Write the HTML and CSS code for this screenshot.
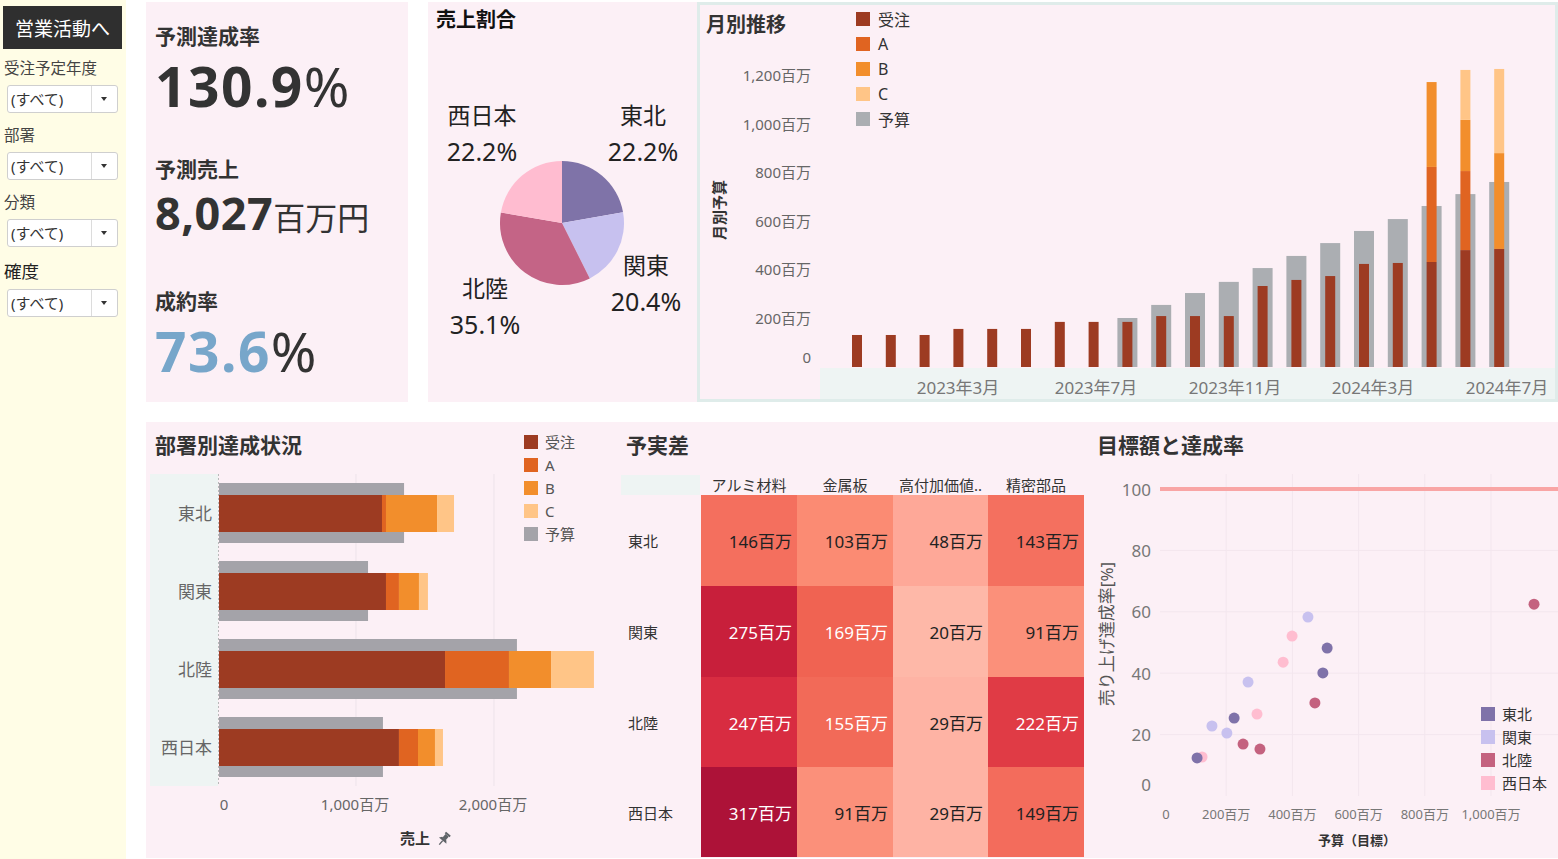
FILE: index.html
```html
<!DOCTYPE html>
<html lang="ja">
<head>
    <meta charset="UTF-8">
    <meta name="viewport" content="width=device-width, initial-scale=1.0">
    <title>営業ダッシュボード</title>
    <link rel="stylesheet" href="styles.css">
</head>
<body>
    <div class="sidebar">
        <button class="nav-button">営業活動へ</button>
        <div class="filter">
            <div class="filter-label">受注予定年度</div>
            <div class="select"><span class="select-value">(すべて)</span><span class="select-arrow"></span></div>
        </div>
        <div class="filter">
            <div class="filter-label">部署</div>
            <div class="select"><span class="select-value">(すべて)</span><span class="select-arrow"></span></div>
        </div>
        <div class="filter">
            <div class="filter-label">分類</div>
            <div class="select"><span class="select-value">(すべて)</span><span class="select-arrow"></span></div>
        </div>
        <div class="filter filter-last">
            <div class="filter-label">確度</div>
            <div class="select"><span class="select-value">(すべて)</span><span class="select-arrow"></span></div>
        </div>
    </div>

    <div class="dashboard">
        <div class="top-row">
            <div class="panel kpi">
                <div class="kpi-label">予測達成率</div>
                <div class="kpi-value"><span class="kpi-number">130.9</span><span class="kpi-unit">%</span></div>
                <div class="kpi-label kpi-gap">予測売上</div>
                <div class="kpi-value kpi-sales"><span class="kpi-number">8,027</span><span class="kpi-unit">百万円</span></div>
                <div class="kpi-label kpi-gap-lg">成約率</div>
                <div class="kpi-value"><span class="kpi-number kpi-blue">73.6</span><span class="kpi-unit">%</span></div>
            </div>

            <div class="panel pie-panel">
                <div class="panel-title pie-title">売上割合</div>
                <svg class="chart" width="269" height="370" viewBox="428 32 269 370">
                    <path d="M562 221 L562 159 A62 62 0 0 1 623.05 210.13 Z" fill="#7f73a8"/>
                    <path d="M562 221 L623.05 210.13 A62 62 0 0 1 589.8 276.42 Z" fill="#c7c1ef"/>
                    <path d="M562 221 L589.8 276.42 A62 62 0 0 1 500.89 210.53 Z" fill="#c46486"/>
                    <path d="M562 221 L500.89 210.53 A62 62 0 0 1 562 159 Z" fill="#ffbcd0"/>
                    <text class="pie-label" x="482" y="113">西日本</text>
                    <text class="pie-pct" x="482" y="149">22.2%</text>
                    <text class="pie-label" x="643" y="113">東北</text>
                    <text class="pie-pct" x="643" y="149">22.2%</text>
                    <text class="pie-label" x="646" y="263">関東</text>
                    <text class="pie-pct" x="646" y="299">20.4%</text>
                    <text class="pie-label" x="485" y="286">北陸</text>
                    <text class="pie-pct" x="485" y="322">35.1%</text>
                </svg>
            </div>

            <div class="panel monthly">
                <div class="panel-title monthly-title">月別推移</div>
                <ul class="legend monthly-legend">
                    <li><i class="swatch order"></i>受注</li>
                    <li><i class="swatch rank-a"></i>A</li>
                    <li><i class="swatch rank-b"></i>B</li>
                    <li><i class="swatch rank-c"></i>C</li>
                    <li><i class="swatch budget"></i>予算</li>
                </ul>
                <svg class="chart" id="monthlyChart" width="855" height="360" viewBox="700 39 855 360"></svg>
            </div>
        </div>

        <div class="bottom-row">
            <div class="panel dept">
                <div class="panel-title">部署別達成状況</div>
                <ul class="legend dept-legend">
                    <li><i class="swatch order"></i>受注</li>
                    <li><i class="swatch rank-a"></i>A</li>
                    <li><i class="swatch rank-b"></i>B</li>
                    <li><i class="swatch rank-c"></i>C</li>
                    <li><i class="swatch budget-dept"></i>予算</li>
                </ul>
                <svg class="chart" id="deptChart" width="468" height="397" viewBox="146 461 468 397"></svg>
            </div>

            <div class="panel diff">
                <div class="panel-title diff-title">予実差</div>
                <div class="heatmap">
                    <div class="heat-corner"></div>
                    <div class="heat-col">アルミ材料</div>
                    <div class="heat-col">金属板</div>
                    <div class="heat-col">高付加価値..</div>
                    <div class="heat-col">精密部品</div>

                    <div class="heat-row">東北</div>
                    <div class="heat-cell" style="background:#f46f5e">146百万</div>
                    <div class="heat-cell" style="background:#fb8b73">103百万</div>
                    <div class="heat-cell" style="background:#fea898">48百万</div>
                    <div class="heat-cell" style="background:#f4705f">143百万</div>

                    <div class="heat-row">関東</div>
                    <div class="heat-cell dark" style="background:#c81f3b">275百万</div>
                    <div class="heat-cell dark" style="background:#f06352">169百万</div>
                    <div class="heat-cell" style="background:#feb8a8">20百万</div>
                    <div class="heat-cell" style="background:#fb907a">91百万</div>

                    <div class="heat-row">北陸</div>
                    <div class="heat-cell dark" style="background:#d82c41">247百万</div>
                    <div class="heat-cell dark" style="background:#f26a58">155百万</div>
                    <div class="heat-cell" style="background:#feb3a4">29百万</div>
                    <div class="heat-cell dark" style="background:#e03b45">222百万</div>

                    <div class="heat-row">西日本</div>
                    <div class="heat-cell dark" style="background:#ad1238">317百万</div>
                    <div class="heat-cell" style="background:#fb907a">91百万</div>
                    <div class="heat-cell" style="background:#feb3a4">29百万</div>
                    <div class="heat-cell" style="background:#f36c5c">149百万</div>
                </div>
            </div>

            <div class="panel scatter">
                <div class="panel-title scatter-title">目標額と達成率</div>
                <ul class="legend scatter-legend">
                    <li><i class="swatch tohoku"></i>東北</li>
                    <li><i class="swatch kanto"></i>関東</li>
                    <li><i class="swatch hokuriku"></i>北陸</li>
                    <li><i class="swatch nishi"></i>西日本</li>
                </ul>
                <svg class="chart" id="scatterChart" width="468" height="397" viewBox="1090 461 468 397"></svg>
            </div>
        </div>
    </div>

    <script>
        const SVG_NS = 'http://www.w3.org/2000/svg';
        const STACK_COLORS = ['#9d3b22', '#e06421', '#f28e2c', '#ffc587'];

        function el(parent, tag, attrs, text) {
            const node = document.createElementNS(SVG_NS, tag);
            for (const key in attrs) node.setAttribute(key, attrs[key]);
            if (text !== undefined) node.textContent = text;
            parent.appendChild(node);
            return node;
        }

        // 月別推移: [受注, A, B, C, 予算] (百万円)
        function drawMonthly() {
            const svg = document.getElementById('monthlyChart');
            const base = 367;
            const scale = 0.2425;
            const y = v => base - v * scale;
            const months = [
                [132, 0, 0, 0, 0], [132, 0, 0, 0, 0], [132, 0, 0, 0, 0],
                [157, 0, 0, 0, 0], [157, 0, 0, 0, 0], [157, 0, 0, 0, 0],
                [186, 0, 0, 0, 0], [186, 0, 0, 0, 0], [186, 0, 0, 0, 202],
                [210, 0, 0, 0, 256], [210, 0, 0, 0, 305], [210, 0, 0, 0, 351],
                [334, 0, 0, 0, 408], [359, 0, 0, 0, 458], [375, 0, 0, 0, 511],
                [425, 0, 0, 0, 561], [429, 0, 0, 0, 610], [433, 392, 350, 0, 664],
                [482, 326, 211, 206, 713], [487, 0, 395, 347, 763]
            ];

            el(svg, 'rect', { x: 820, y: 368, width: 735, height: 31, fill: '#eef4f3' });

            for (let v = 0; v <= 1200; v += 200) {
                const label = v === 0 ? '0' : v.toLocaleString('en-US') + '百万';
                el(svg, 'text', { class: 'axis-label', x: 811, y: v === 0 ? base - 10 : y(v) - 1, 'text-anchor': 'end' }, label);
            }
            el(svg, 'text', { class: 'axis-title large', x: 0, y: 0, transform: 'translate(719 210) rotate(-90)', 'text-anchor': 'middle' }, '月別予算');

            months.forEach((m, i) => {
                const cx = 857 + i * 33.8;
                if (m[4]) {
                    el(svg, 'rect', { x: cx - 10, y: y(m[4]), width: 20, height: m[4] * scale, fill: '#abaeb2' });
                }
                let total = 0;
                for (let s = 0; s < 4; s++) {
                    if (!m[s]) continue;
                    el(svg, 'rect', { x: cx - 5, y: y(total + m[s]), width: 10, height: m[s] * scale, fill: STACK_COLORS[s] });
                    total += m[s];
                }
            });

            const ticks = [[958, '2023年3月'], [1096, '2023年7月'], [1235, '2023年11月'], [1373, '2024年3月'], [1507, '2024年7月']];
            ticks.forEach(t => {
                el(svg, 'text', { class: 'month-label', x: t[0], y: 387, 'text-anchor': 'middle' }, t[1]);
            });
        }

        // 部署別達成状況: [受注, A, B, C], 予算
        function drawDept() {
            const svg = document.getElementById('deptChart');
            const x0 = 219;
            const scale = 0.138;
            const rows = [
                { name: '東北', center: 514, stack: [1181, 29, 370, 123], budget: 1341 },
                { name: '関東', center: 592, stack: [1210, 94, 145, 65], budget: 1080 },
                { name: '北陸', center: 670, stack: [1638, 463, 305, 311], budget: 2159 },
                { name: '西日本', center: 748, stack: [1304, 138, 123, 58], budget: 1188 }
            ];

            el(svg, 'rect', { x: 150, y: 475, width: 68, height: 312, fill: '#eef4f3' });
            [356, 494].forEach(gx => {
                el(svg, 'line', { x1: gx, y1: 475, x2: gx, y2: 787, stroke: '#ede3ea', 'stroke-width': 1 });
            });

            rows.forEach(r => {
                el(svg, 'rect', { x: x0, y: r.center - 30, width: r.budget * scale, height: 60, fill: '#a4a3a9' });
                let total = 0;
                r.stack.forEach((v, s) => {
                    el(svg, 'rect', { x: x0 + total * scale, y: r.center - 18, width: v * scale, height: 37, fill: STACK_COLORS[s] });
                    total += v;
                });
                el(svg, 'text', { class: 'row-label', x: 212, y: r.center, 'text-anchor': 'end' }, r.name);
            });

            el(svg, 'line', { x1: 218.5, y1: 475, x2: 218.5, y2: 787, stroke: '#b9b9b9', 'stroke-dasharray': '2 2' });

            el(svg, 'text', { class: 'axis-label', x: 224, y: 805, 'text-anchor': 'middle' }, '0');
            el(svg, 'text', { class: 'axis-label', x: 355, y: 805, 'text-anchor': 'middle' }, '1,000百万');
            el(svg, 'text', { class: 'axis-label', x: 493, y: 805, 'text-anchor': 'middle' }, '2,000百万');
            el(svg, 'text', { class: 'axis-title large', x: 415, y: 839, 'text-anchor': 'middle' }, '売上');

            // ピン留めアイコン
            const pin = el(svg, 'g', { transform: 'translate(444 840) rotate(40) scale(1.15) translate(-6 -6)', fill: '#5f6368' });
            el(pin, 'rect', { x: 3.3, y: 0, width: 5.4, height: 1.8 });
            el(pin, 'rect', { x: 4.2, y: 1.8, width: 3.6, height: 4 });
            el(pin, 'path', { d: 'M1.8 7.8 L3.6 5.6 L8.4 5.6 L10.2 7.8 Z' });
            el(pin, 'rect', { x: 5.4, y: 7.8, width: 1.2, height: 4.6 });
        }

        // 目標額と達成率: [予算(百万円), 達成率(%)]
        function drawScatter() {
            const svg = document.getElementById('scatterChart');
            const x = v => 1160 + v * 0.331;
            const y = p => 797 - p * 3.07;
            const groups = [
                { color: '#ffbdd0', points: [[127, 12.7], [293, 26.7], [372, 43.6], [399, 52.1]] },
                { color: '#c4627f', points: [[251, 16.9], [302, 15.3], [468, 30.3], [1130, 62.5]] },
                { color: '#c8c1ef', points: [[157, 22.8], [202, 20.5], [266, 37.1], [447, 58.3]] },
                { color: '#7f72a9', points: [[112, 12.4], [224, 25.4], [492, 40.1], [505, 48.2]] }
            ];

            for (let p = 20; p <= 100; p += 20) {
                el(svg, 'line', { x1: 1160, y1: y(p), x2: 1558, y2: y(p), stroke: '#f3e6ee', 'stroke-width': 1 });
            }
            for (let v = 200; v <= 1000; v += 200) {
                el(svg, 'line', { x1: x(v), y1: 475, x2: x(v), y2: 797, stroke: '#f3e6ee', 'stroke-width': 1 });
            }
            el(svg, 'line', { x1: 1160, y1: 490, x2: 1558, y2: 490, stroke: '#f9a5a5', 'stroke-width': 4 });

            for (let p = 20; p <= 100; p += 20) {
                el(svg, 'text', { class: 'scatter-y', x: 1151, y: y(p), 'text-anchor': 'end' }, String(p));
            }
            el(svg, 'text', { class: 'scatter-y', x: 1151, y: 785, 'text-anchor': 'end' }, '0');
            el(svg, 'text', { class: 'scatter-y-title', x: 0, y: 0, transform: 'translate(1106 635) rotate(-90)', 'text-anchor': 'middle' }, '売り上げ達成率[%]');

            el(svg, 'text', { class: 'scatter-x', x: 1166, y: 815, 'text-anchor': 'middle' }, '0');
            for (let v = 200; v <= 1000; v += 200) {
                el(svg, 'text', { class: 'scatter-x', x: x(v), y: 815, 'text-anchor': 'middle' }, v.toLocaleString('en-US') + '百万');
            }
            el(svg, 'text', { class: 'axis-title', x: 1357, y: 841, 'text-anchor': 'middle' }, '予算（目標）');

            groups.forEach(g => {
                g.points.forEach(pt => {
                    el(svg, 'circle', { cx: x(pt[0]), cy: y(pt[1]), r: 5.5, fill: g.color });
                });
            });
        }

        drawMonthly();
        drawDept();
        drawScatter();
    </script>
</body>
</html>
```

FILE: styles.css
```css
body {
    margin: 0;
    padding: 0;
    width: 1558px;
    height: 859px;
    overflow: hidden;
    display: flex;
    background: #fff;
    font-family: "Noto Sans", "Noto Sans CJK JP", sans-serif;
    color: #333;
}

/* 左側のフィルター欄 */
.sidebar {
    width: 123px;
    height: 859px;
    padding-left: 3px;
    background: #fffde6;
    flex-shrink: 0;
}

.nav-button {
    display: block;
    width: 119px;
    height: 43px;
    margin-top: 6px;
    border: none;
    background: #2f2f2f;
    color: #fff;
    font-family: inherit;
    font-size: 19px;
    padding: 0;
}

.filter {
    margin-top: 8px;
}

.filter + .filter {
    margin-top: 11px;
}

.filter-last {
    margin-top: 12px !important;
}

.filter-label {
    margin-left: 1px;
    font-size: 15.5px;
    line-height: 22px;
    color: #444;
}

.filter-last .filter-label {
    font-size: 17.5px;
    line-height: 24px;
    color: #222;
}

.select {
    display: flex;
    width: 109px;
    height: 26px;
    margin: 6px 0 0 4px;
    background: #fff;
    border: 1px solid #cfcfcf;
    border-radius: 3px;
}

.select-value {
    flex: 1;
    padding-left: 3px;
    font-size: 15px;
    line-height: 26px;
    color: #333;
}

.select-arrow {
    width: 25px;
    border-left: 1px solid #dcdcdc;
    position: relative;
}

.select-arrow::after {
    content: "";
    position: absolute;
    left: 9px;
    top: 11px;
    border-left: 3.5px solid transparent;
    border-right: 3.5px solid transparent;
    border-top: 4px solid #333;
}

/* ダッシュボード本体 */
.dashboard {
    margin-left: 20px;
    width: 1412px;
}

.top-row {
    display: flex;
    height: 400px;
    margin-top: 2px;
}

.bottom-row {
    display: flex;
    height: 436px;
    margin-top: 20px;
}

.panel {
    background: #fcf0f6;
    box-sizing: border-box;
    position: relative;
}

.panel-title {
    font-size: 21px;
    font-weight: bold;
    line-height: 30px;
    height: 30px;
    padding: 8px 0 0 9px;
    color: #333;
}

.chart {
    display: block;
}

.chart text {
    font-family: "Noto Sans", "Noto Sans CJK JP", sans-serif;
    dominant-baseline: central;
}

/* KPI */
.kpi {
    width: 262px;
    margin-right: 20px;
    padding: 19px 0 0 9px;
}

.kpi-label {
    font-size: 21px;
    font-weight: bold;
    line-height: 30px;
    height: 30px;
}

.kpi-value {
    display: flex;
    align-items: baseline;
    height: 60px;
    margin-top: 5px;
    white-space: nowrap;
}

.kpi-value span {
    line-height: 60px;
}

.kpi-number {
    font-size: 55px;
    font-weight: bold;
    letter-spacing: 1.5px;
}

.kpi-unit {
    font-size: 55px;
}

.kpi-blue {
    color: #77a6ca;
}

.kpi-gap {
    margin-top: 38px;
}

.kpi-sales {
    height: 50px;
    margin-top: 4px;
}

.kpi-sales span {
    line-height: 50px;
}

.kpi-sales .kpi-number {
    font-size: 45px;
    letter-spacing: 0.5px;
}

.kpi-sales .kpi-unit {
    font-size: 32px;
}

.kpi-gap-lg {
    margin-top: 48px;
}

/* 売上割合 */
.pie-panel {
    width: 269px;
}

.pie-title {
    font-size: 20px;
    padding: 3px 0 0 8px;
    line-height: 29px;
    height: 29px;
    color: #111;
}

.pie-label {
    font-size: 23px;
    fill: #222;
    text-anchor: middle;
}

.pie-pct {
    font-size: 25px;
    fill: #222;
    text-anchor: middle;
}

/* 月別推移 */
.monthly {
    width: 861px;
    border: 3px solid #dfecea;
}

.monthly-title {
    font-size: 20px;
    line-height: 28px;
    height: 28px;
    padding: 6px 0 0 6px;
}

.legend {
    list-style: none;
    margin: 0;
    padding: 0;
    position: absolute;
    color: #333;
}

.legend li {
    display: flex;
    align-items: center;
}

.swatch {
    display: inline-block;
    width: 14px;
    height: 14px;
}

.monthly-legend {
    top: 1px;
    left: 156px;
    font-size: 16px;
}

.monthly-legend li {
    height: 25px;
}

.monthly-legend .swatch {
    margin-right: 8px;
}

.dept-legend {
    top: 8px;
    left: 378px;
    font-size: 15px;
    color: #555;
}

.dept-legend li,
.scatter-legend li {
    height: 23px;
}

.dept-legend .swatch,
.scatter-legend .swatch {
    margin-right: 7px;
}

.scatter-legend {
    top: 280px;
    left: 391px;
    font-size: 15px;
}

.order { background: #9d3b22; }
.rank-a { background: #e06421; }
.rank-b { background: #f28e2c; }
.rank-c { background: #ffc587; }
.budget { background: #abaeb2; }
.budget-dept { background: #a4a3a9; }
.tohoku { background: #7f72a9; }
.kanto { background: #c8c1ef; }
.hokuriku { background: #c4627f; }
.nishi { background: #ffbdd0; }

.axis-label {
    font-size: 15px;
    fill: #666;
}

.month-label {
    font-size: 17px;
    fill: #777;
}

.axis-title {
    font-size: 13px;
    font-weight: bold;
    fill: #333;
}

.axis-title.large {
    font-size: 15px;
}

.row-label {
    font-size: 17px;
    fill: #666;
}

/* 部署別 / 予実差 / 散布図 */
.dept {
    width: 468px;
}

.diff {
    width: 476px;
}

.diff-title {
    padding-left: 12px;
}

.heatmap {
    display: grid;
    grid-template-columns: 80px 96px 96px 95px 96px;
    grid-template-rows: 20px 91px 91px 90px 90px;
    margin: 15px 0 0 7px;
}

.heat-corner {
    background: #eef4f3;
    margin-right: 1px;
}

.heat-col {
    font-size: 15px;
    line-height: 20px;
    text-align: center;
    white-space: nowrap;
    color: #333;
}

.heat-row {
    display: flex;
    align-items: center;
    padding-left: 7px;
    font-size: 15px;
    color: #333;
}

.heat-cell {
    display: flex;
    align-items: center;
    justify-content: flex-end;
    padding-right: 5px;
    font-size: 17px;
    color: #222;
}

.heat-cell.dark {
    color: #fff;
}

.scatter {
    width: 468px;
}

.scatter-title {
    padding-left: 7px;
}

.scatter-y {
    font-size: 17px;
    fill: #777;
}

.scatter-y-title {
    font-size: 17px;
    fill: #555;
}

.scatter-x {
    font-size: 13px;
    fill: #777;
}
```
